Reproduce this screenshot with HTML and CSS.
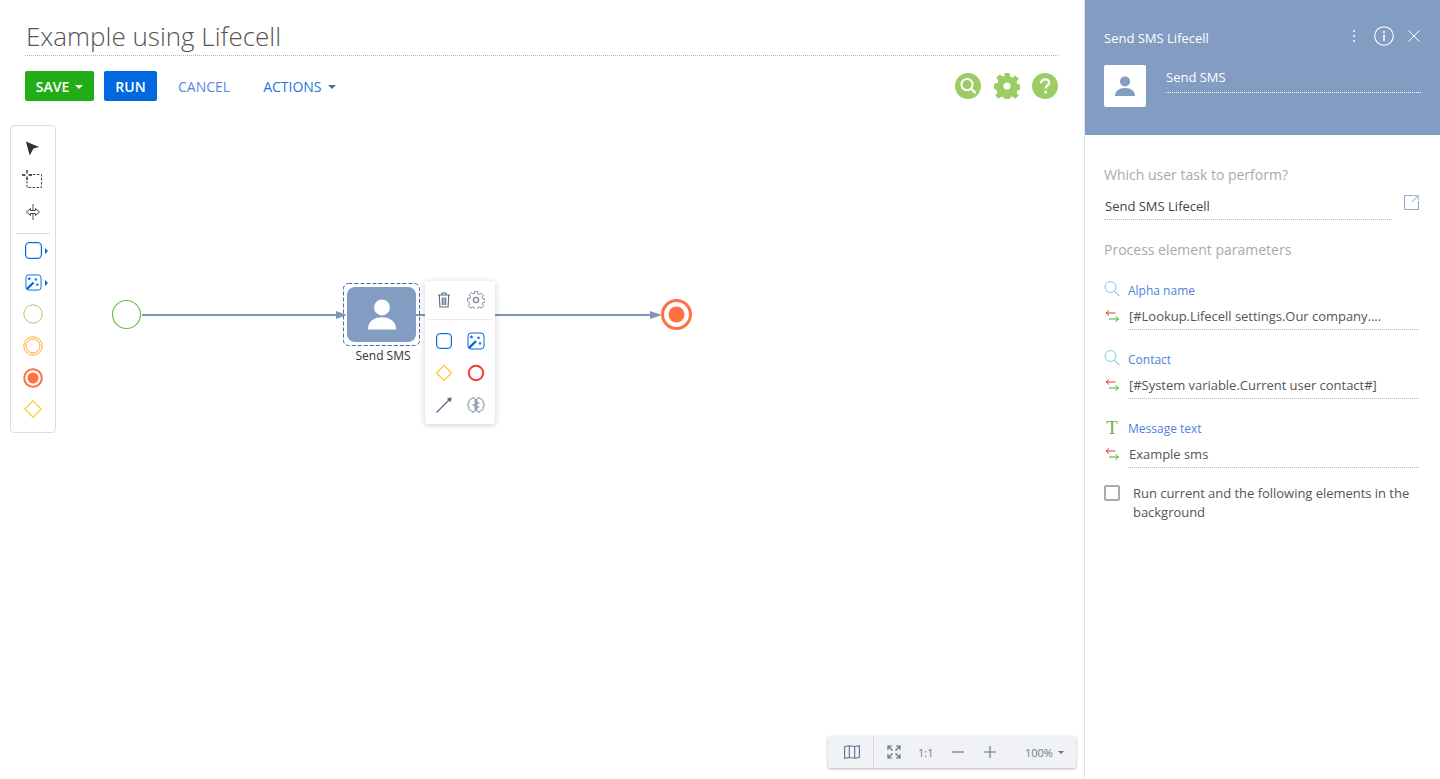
FILE: index.html
```html
<!DOCTYPE html>
<html lang="en">
<head>
<meta charset="utf-8">
<title>Example using Lifecell</title>
<link rel="stylesheet" href="styles.css">
</head>
<body>
<div class="app">
  <main class="designer">
    <header class="head">
      <h1 class="title">Example using Lifecell</h1>
      <div class="toolbar">
        <button class="btn btn-green">SAVE<span class="caret"></span></button>
        <button class="btn btn-blue">RUN</button>
        <button class="link link-cancel">CANCEL</button>
        <button class="link link-actions">ACTIONS<span class="caret caret-dark"></span></button>
        <div class="tools">
          <svg class="tool" viewBox="0 0 26 26"><circle cx="13" cy="13" r="13" fill="#9ccc65"/><circle cx="12" cy="11.5" r="5.6" fill="none" stroke="#fff" stroke-width="2"/><path d="M16 15.5l4.6 4.6" stroke="#fff" stroke-width="2.2"/></svg>
          <svg class="tool tool-gear" viewBox="0 0 26 26"><use href="#gear" fill="#9ccc65" fill-rule="evenodd"/></svg>
          <svg class="tool" viewBox="0 0 26 26"><circle cx="13" cy="13" r="13" fill="#9ccc65"/><path d="M9 10.200c0-2.400 1.800-3.900 4.100-3.900 2.300 0 4 1.400 4 3.500 0 2.800-3.400 3-3.400 5.700" fill="none" stroke="#fff" stroke-width="2.300"/><rect x="12.500" y="17.800" width="2.400" height="2.600" fill="#fff"/></svg>
        </div>
      </div>
    </header>

    <section class="canvas">
      <svg class="wires" viewBox="0 0 1084 654" width="1084" height="654">
        <circle cx="126.500" cy="189.500" r="14" fill="#fff" stroke="#6cc04f" stroke-width="1.200"/>
        <path d="M142 190H340M416 190H655" stroke="#7f95b5" stroke-width="2" fill="none"/>
      </svg>

      <div class="node">
        <div class="node-frame">
          <div class="node-body">
            <svg class="node-icon" viewBox="0 0 32 32"><circle cx="16" cy="8.500" r="8.500" fill="#fff"/><path d="M1 32c0-8 6-13 15-13s15 5 15 13z" fill="#fff"/></svg>
          </div>
        </div>
        <div class="node-label">Send SMS</div>
      </div>

      <svg class="wires" viewBox="0 0 1084 654" width="1084" height="654">
        <rect x="343.500" y="158.500" width="76" height="62" rx="5" fill="none" stroke="#3f6db5" stroke-width="1" stroke-dasharray="4 2"/>
        <path d="M336 186l11 4-11 4zM650 186l12 4-12 4z" fill="#7f95b5"/>
        <circle cx="676.500" cy="189.500" r="14" fill="#fff" stroke="#ff7043" stroke-width="3"/>
        <circle cx="676.500" cy="189.500" r="8" fill="#ff7043"/>
      </svg>

      <aside class="palette">
        <svg class="pal-arrow" viewBox="0 0 16 16"><path d="M1 1L15 7 9 8.500 5 16z" fill="#333"/></svg>
        <svg class="pal-marquee" viewBox="0 0 22 22"><path d="M5 1v3.500M5 7.500V11M0 6h3.500M6.500 6H10" stroke="#222" stroke-width="1.300"/><path d="M7 5.500h12.500v13h-14.500V9" fill="none" stroke="#444" stroke-dasharray="2.500 1.500"/></svg>
        <svg class="pal-space" viewBox="0 0 16 16"><path d="M8 0v16" stroke="#555" stroke-width="1"/><path d="M1.500 8L5.500 4.500V6.500H10.500V4.500L14.500 8 10.500 11.500V9.500H5.500V11.500z" stroke="#444" stroke-width="1" fill="#fff"/></svg>
        <div class="pal-sep"></div>
        <div class="pal-row">
          <span class="sq"></span><span class="tri"></span>
        </div>
        <div class="pal-row">
          <svg class="pal-magic" viewBox="0 0 18 18"><use href="#magic"/></svg><span class="tri"></span>
        </div>
        <svg class="pal-ev" viewBox="0 0 20 20"><circle cx="10" cy="10" r="9.200" fill="none" stroke="#9ccc65" stroke-width="1"/></svg>
        <svg class="pal-ev" viewBox="0 0 20 20"><circle cx="10" cy="10" r="9.200" fill="none" stroke="#ffa726" stroke-width="1"/><circle cx="10" cy="10" r="7" fill="none" stroke="#ffa726" stroke-width="1"/></svg>
        <svg class="pal-ev" viewBox="0 0 20 20"><circle cx="10" cy="10" r="8.800" fill="none" stroke="#ff7043" stroke-width="2"/><circle cx="10" cy="10" r="5.500" fill="#ff7043"/></svg>
        <svg class="pal-diamond" viewBox="0 0 18 18"><path d="M9 .8L17.200 9 9 17.200.8 9z" fill="none" stroke="#ffca28" stroke-width="1.200"/></svg>
      </aside>

      <div class="menu">
        <div class="menu-row">
          <svg class="mi" viewBox="0 0 18 18"><path d="M3 4h12M7 4V2h4V4M4.300 4l.6 12h8.200l.6-12M7.300 6.500v7.500M9 6.500v7.500M10.700 6.500v7.500" fill="none" stroke="#5a6b85" stroke-width="1.100"/></svg>
          <svg class="mi" viewBox="-1 -1 28 28"><use href="#gear" fill="none" stroke="#7d8798" stroke-width="1.500"/><circle cx="13" cy="13" r="4.600" fill="none" stroke="#7d8798" stroke-width="1.500"/></svg>
        </div>
        <div class="menu-grid">
          <span class="sq"></span>
          <svg class="mi" viewBox="0 0 18 18"><use href="#magic"/></svg>
          <svg class="mi" viewBox="0 0 18 18"><path d="M9 1.500L16.500 9 9 16.500 1.500 9z" fill="none" stroke="#ffca28" stroke-width="1.200"/></svg>
          <svg class="mi" viewBox="0 0 18 18"><circle cx="9" cy="9" r="7.200" fill="none" stroke="#f23b30" stroke-width="2"/></svg>
          <svg class="mi" viewBox="0 0 18 18"><path d="M1.500 16.500L15 3" stroke="#5a6b85" stroke-width="1.200"/><path d="M16.800 1.200l-1.200 5-3.800-3.800z" fill="#5a6b85"/></svg>
          <svg class="mi" viewBox="0 0 18 18"><path d="M8.200 3A2.400 2.400 0 0 0 4 3.200 2.600 2.600 0 0 0 2 6.800a2.600 2.600 0 0 0 0 4.400 2.600 2.600 0 0 0 2.200 3.600A2.400 2.400 0 0 0 8.200 15zM9.800 3A2.400 2.400 0 0 1 14 3.200a2.600 2.600 0 0 1 2 3.600 2.600 2.600 0 0 1 0 4.400 2.600 2.600 0 0 1-2.200 3.600A2.400 2.400 0 0 1 9.800 15zM9.800 7h2.500M9.800 11h2.500M8.200 9H5.500" fill="none" stroke="#6b7890" stroke-width="1"/></svg>
        </div>
      </div>

      <div class="zoombar">
        <div class="zb-map">
          <svg class="zb-ic" viewBox="0 0 16 14"><path d="M.6 1.500L5.300.7l5.400.8 4.700-.8v11.800l-4.700.8-5.300-.8-4.800.8zM5.300.7v11.800M10.700 1.500v11.800" fill="none" stroke="#5f7390" stroke-width="1.100"/></svg>
        </div>
        <div class="zb-tools">
          <svg class="zb-fit" viewBox="0 0 14 14"><path d="M1 5V1h4M9 1h4v4M13 9v4H9M5 13H1V9M1.500 1.500L5.500 5.500M12.500 1.500L8.500 5.500M12.500 12.500L8.500 8.500M1.500 12.500L5.500 8.500" fill="none" stroke="#5f7390" stroke-width="1.200"/></svg>
          <span class="zb-one">1:1</span>
          <svg class="zb-pm zb-minus" viewBox="0 0 12 12"><path d="M0 6h12" stroke="#5f7390" stroke-width="1.100"/></svg>
          <svg class="zb-pm" viewBox="0 0 12 12"><path d="M0 6h12M6 0v12" stroke="#5f7390" stroke-width="1.100"/></svg>
          <span class="zb-pct">100%</span><span class="zb-caret"></span>
        </div>
      </div>
    </section>
  </main>

  <aside class="panel">
    <div class="panel-head">
      <div class="ph-top">
        <span class="ph-title">Send SMS Lifecell</span>
        <svg class="ph-dots" viewBox="0 0 4 14"><path d="M2 1v2M2 6v2M2 11v2" stroke="#fff" stroke-width="1.600"/></svg>
        <svg class="ph-info" viewBox="0 0 20 20"><circle cx="10" cy="10" r="9.300" fill="none" stroke="#fff" stroke-width="1.100"/><path d="M10 8.500V15M10 5v2" stroke="#fff" stroke-width="1.600"/></svg>
        <svg class="ph-close" viewBox="0 0 12 12"><path d="M.5.500l11 11M11.500.500l-11 11" stroke="#fff" stroke-width="1"/></svg>
      </div>
      <div class="ph-bottom">
        <div class="avatar">
          <svg class="avatar-ic" viewBox="0 0 20 20"><circle cx="10" cy="5.400" r="5" fill="#829cc2"/><path d="M0 20c0-5 4-8 10-8s10 3 10 8z" fill="#829cc2"/></svg>
        </div>
        <div class="ph-name">Send SMS</div>
      </div>
    </div>
    <div class="panel-body">
      <div class="caption">Which user task to perform?</div>
      <div class="task-row">
        <div class="task-value">Send SMS Lifecell</div>
        <svg class="open-ic" viewBox="0 0 15 15"><path d="M9 .500H.500v14h14V6M8 7L14 1M10 .800h4.200V5" fill="none" stroke="#8fa6c6" stroke-width="1"/></svg>
      </div>
      <div class="caption caption-params">Process element parameters</div>

      <div class="param">
        <div class="param-label">
          <svg class="p-ic" viewBox="0 0 16 16"><use href="#lens"/></svg>
          <span>Alpha name</span>
        </div>
        <div class="param-value">
          <svg class="p-swap" viewBox="0 0 14 12"><use href="#swap"/></svg>
          <span class="p-text">[#Lookup.Lifecell settings.Our company....</span>
        </div>
      </div>
      <div class="param">
        <div class="param-label">
          <svg class="p-ic" viewBox="0 0 16 16"><use href="#lens"/></svg>
          <span>Contact</span>
        </div>
        <div class="param-value">
          <svg class="p-swap" viewBox="0 0 14 12"><use href="#swap"/></svg>
          <span class="p-text">[#System variable.Current user contact#]</span>
        </div>
      </div>
      <div class="param">
        <div class="param-label">
          <span class="p-t">T</span>
          <span>Message text</span>
        </div>
        <div class="param-value">
          <svg class="p-swap" viewBox="0 0 14 12"><use href="#swap"/></svg>
          <span class="p-text">Example sms</span>
        </div>
      </div>

      <div class="check">
        <span class="box"></span>
        <span class="check-text">Run current and the following elements in the background</span>
      </div>
    </div>
  </aside>
</div>

<svg class="defs" width="0" height="0">
  <defs>
    <path id="gear" d="M10.500 0h5l.6 3.700 2.200.9 3.100-2.200 3.300 3.400-2.200 3 .9 2.300 3.600.6v4.800l-3.600.7-.9 2.200 2.200 3-3.300 3.400-3.100-2.200-2.200.9-.6 3.500h-5l-.6-3.500-2.200-.9-3.100 2.200-3.300-3.400 2.200-3-.9-2.200L0 15.500v-4.800l3.600-.6.9-2.300-2.200-3 3.300-3.400 3.100 2.200 2.200-.9zM13 9.400a3.600 3.600 0 1 0 0 7.200 3.600 3.600 0 0 0 0-7.200z"/>
    <g id="lens">
      <circle cx="6.500" cy="6" r="5.500" fill="none" stroke="#74cdf5" stroke-width="1"/>
      <path d="M10.500 10.200l5 5" stroke="#5aa9d6" stroke-width="1"/>
    </g>
    <g id="magic">
      <rect x="1" y="1" width="16" height="16" rx="3" fill="#fff" stroke="#0069e0" stroke-width="1"/>
      <path d="M2 16l7-7" stroke="#0069e0" stroke-width="2.400"/>
      <path d="M4.500 3l.6 1.300 1.300.2-1 .9.3 1.300-1.200-.7-1.200.7.300-1.300-1-.9 1.300-.2zM11.500 4l.5 1.100 1.200.2-.9.8.2 1.200-1-.6-1 .6.2-1.200-.9-.8 1.200-.2zM13 9.500l.5 1.100 1.200.2-.9.8.2 1.200-1-.6-1 .6.2-1.200-.9-.8 1.200-.2z" fill="#0069e0"/>
    </g>
    <g id="swap">
      <path d="M10.500 3H1M1 3l3-2.500M1 3l3 2.500" stroke="#e53935" stroke-width="1" fill="none"/>
      <path d="M4 9h9.500M13.500 9l-3-2.500M13.500 9l-3 2.500" stroke="#43b02a" stroke-width="1" fill="none"/>
    </g>
  </defs>
</svg>
</body>
</html>
```

FILE: styles.css
```css
* { box-sizing: border-box; }
html, body { margin: 0; height: 100%; background: #fff; overflow: hidden; }
body { font-family: "Open Sans", "Liberation Sans", sans-serif; color: #444; }
.defs { position: absolute; }
button { font-family: inherit; border: 0; padding: 0; cursor: pointer; }

.app { display: flex; height: 779px; }
.designer { width: 1084px; display: flex; flex-direction: column; }
.panel { width: 356px; border-left: 1px solid #e4e4e4; display: flex; flex-direction: column; }

.head { height: 125px; padding: 0 26px 0 25px; }
.title { margin: 0; height: 56px; padding: 18px 0 0 1px; font-size: 26px; line-height: 36px; font-weight: 300; color: #555; border-bottom: 1px dotted #b5b5b5; }

.toolbar { display: flex; align-items: center; margin-top: 15px; height: 30px; }
.btn { height: 30px; border-radius: 2px; color: #fff; font-size: 14px; font-weight: 600; }
.btn-green { width: 69px; background: #22ad18; margin-right: 10px; }
.btn-blue { width: 53px; background: #0069e0; }
.link { background: none; font-size: 14px; height: 30px; font-weight: 400; }
.link-cancel { color: #5a86e0; margin-left: 21px; }
.link-actions { color: #1a76e3; margin-left: 33px; }
.caret { display: inline-block; margin-left: 6px; border: 4px solid transparent; border-top-color: #fff; border-bottom: 0; vertical-align: 3px; }
.caret-dark { border-top-color: #4f6a94; }
.tools { margin-left: auto; display: flex; gap: 13px; }
.tool { width: 26px; height: 26px; display: block; }
.tool-gear { margin-right: -1px; }

.canvas { position: relative; flex: 1; }
.wires { position: absolute; left: 0; top: 0; pointer-events: none; }

.palette { position: absolute; left: 10px; top: 0; width: 46px; height: 308px; background: #fff; border: 1px solid #ddd; border-radius: 4px; display: flex; flex-direction: column; align-items: center; }
.pal-arrow { width: 15px; height: 16px; display: block; margin: 14px 0 0 -1px; }
.pal-marquee { width: 22px; height: 22px; display: block; margin-top: 13px; }
.pal-space { width: 16px; height: 16px; display: block; margin-top: 13px; margin-left: -1px; }
.pal-sep { width: 34px; height: 1px; background: #ddd; margin-top: 13px; margin-bottom: 8px; }
.pal-row { height: 17px; align-self: flex-start; margin: 0 0 15px 14px; display: flex; align-items: center; gap: 3px; }
.pal-row + .pal-row { margin-bottom: 13px; }
.sq { display: block; width: 17px; height: 17px; border: 1px solid #0069e0; border-radius: 4px; box-shadow: inset 0 0 0 1px #cfe1f8; }
.tri { width: 0; height: 0; border-left: 3px solid #0069e0; border-top: 3px solid transparent; border-bottom: 3px solid transparent; }
.pal-magic { width: 17px; height: 17px; display: block; }
.pal-ev { width: 20px; height: 20px; display: block; margin-bottom: 12px; }
.pal-diamond { width: 18px; height: 18px; display: block; }

.node { position: absolute; left: 343px; top: 158px; width: 77px; }
.node-frame { height: 63px; padding: 4px; }
.node-body { width: 69px; height: 55px; background: #829cc2; border-radius: 8px; display: flex; align-items: center; justify-content: center; }
.node-icon { width: 30px; height: 31px; display: block; }
.node-label { font-size: 12px; line-height: 16px; text-align: center; color: #333; margin-top: 2px; padding-left: 3px; }

.menu { position: absolute; left: 425px; top: 156px; width: 70px; height: 143px; background: #fff; border-radius: 4px; box-shadow: 0 1px 6px rgba(0,0,0,.2); padding: 0 3px; }
.menu-row { display: flex; justify-content: space-around; align-items: center; height: 39px; border-bottom: 1px solid #e8eaee; }
.menu-grid { display: grid; grid-template-columns: 1fr 1fr; row-gap: 14px; justify-items: center; align-items: center; padding-top: 12px; }
.mi { width: 18px; height: 18px; display: block; }
.menu-grid .sq { width: 16px; height: 16px; }

.zoombar { position: absolute; left: 828px; top: 611px; width: 248px; height: 32px; background: #f0f2f6; border-radius: 3px; box-shadow: 0 1px 3px rgba(0,0,0,.3); display: flex; align-items: center; color: #6a7a92; font-size: 11px; }
.zb-map { width: 46px; height: 32px; border-right: 1px solid #d6d9df; display: flex; align-items: center; justify-content: center; padding-left: 2px; }
.zb-ic { width: 16px; height: 14px; display: block; }
.zb-tools { display: flex; align-items: center; padding-left: 13px; flex: 1; }
.zb-fit { width: 14px; height: 14px; display: block; }
.zb-one { margin-left: 17px; width: 15px; }
.zb-pm { width: 12px; height: 12px; display: block; }
.zb-minus { margin: 0 20px 0 19px; }
.zb-pct { margin-left: 29px; }
.zb-caret { margin-left: 5px; border: 3px solid transparent; border-top-color: #5f7390; border-bottom: 0; }

.panel-head { height: 135px; background: #829cc2; color: #fff; padding: 0 19px; }
.ph-top { display: flex; align-items: center; height: 65px; }
.ph-title { font-size: 13px; font-weight: 500; margin-right: auto; margin-top: 11px; }
.ph-dots { width: 4px; height: 14px; margin-top: 7px; margin-right: 18px; display: block; }
.ph-info { width: 20px; height: 20px; margin-top: 7px; margin-right: 14px; display: block; }
.ph-close { width: 12px; height: 12px; margin-top: 7px; margin-right: 1px; display: block; }
.ph-bottom { display: flex; align-items: flex-start; }
.avatar { width: 42px; height: 42px; background: #fff; border-radius: 2px; display: flex; align-items: center; justify-content: center; }
.avatar-ic { width: 20px; height: 20px; display: block; }
.ph-name { width: 255px; margin-left: 20px; height: 28px; font-size: 13px; line-height: 24px; border-bottom: 1px dotted #fff; }

.panel-body { padding: 0 21px 0 19px; flex: 1; }
.caption { font-size: 14px; line-height: 20px; color: #aaa; margin-top: 30px; }
.caption-params { margin-top: 20px; }
.task-row { display: flex; align-items: flex-start; margin-top: 11px; }
.task-value { width: 288px; height: 24px; padding-left: 1px; font-size: 13px; line-height: 20px; border-bottom: 1px dotted #bbb; color: #444; }
.open-ic { width: 15px; height: 15px; margin: -1px 0 0 12px; display: block; }

.param { margin-top: 21px; }
.param + .param { margin-top: 20px; }
.param-label { display: flex; align-items: center; height: 19px; color: #4f7fdf; font-size: 12px; gap: 8px; }
.p-ic { width: 16px; height: 16px; display: block; flex: none; margin-top: -3px; }
.p-t { width: 16px; font-family: "Liberation Serif", serif; font-size: 19px; line-height: 19px; color: #6db33f; text-align: center; margin-top: -3px; }
.param-value { display: flex; align-items: center; height: 27px; margin-top: 3px; font-size: 13px; color: #555; }
.p-swap { width: 14px; height: 12px; display: block; flex: none; margin: -2px 9px 0 1px; }
.p-text { flex: 1; height: 27px; line-height: 27px; border-bottom: 1px dotted #bbb; padding-left: 1px; letter-spacing: -.03px; }

.check { display: flex; align-items: flex-start; margin-top: 16px; }
.box { width: 16px; height: 16px; border: 2px solid #aaa; border-radius: 2px; flex: none; margin-top: 1px; }
.check-text { margin-left: 13px; width: 290px; font-size: 13px; line-height: 19px; color: #555; letter-spacing: -.03px; }
```
